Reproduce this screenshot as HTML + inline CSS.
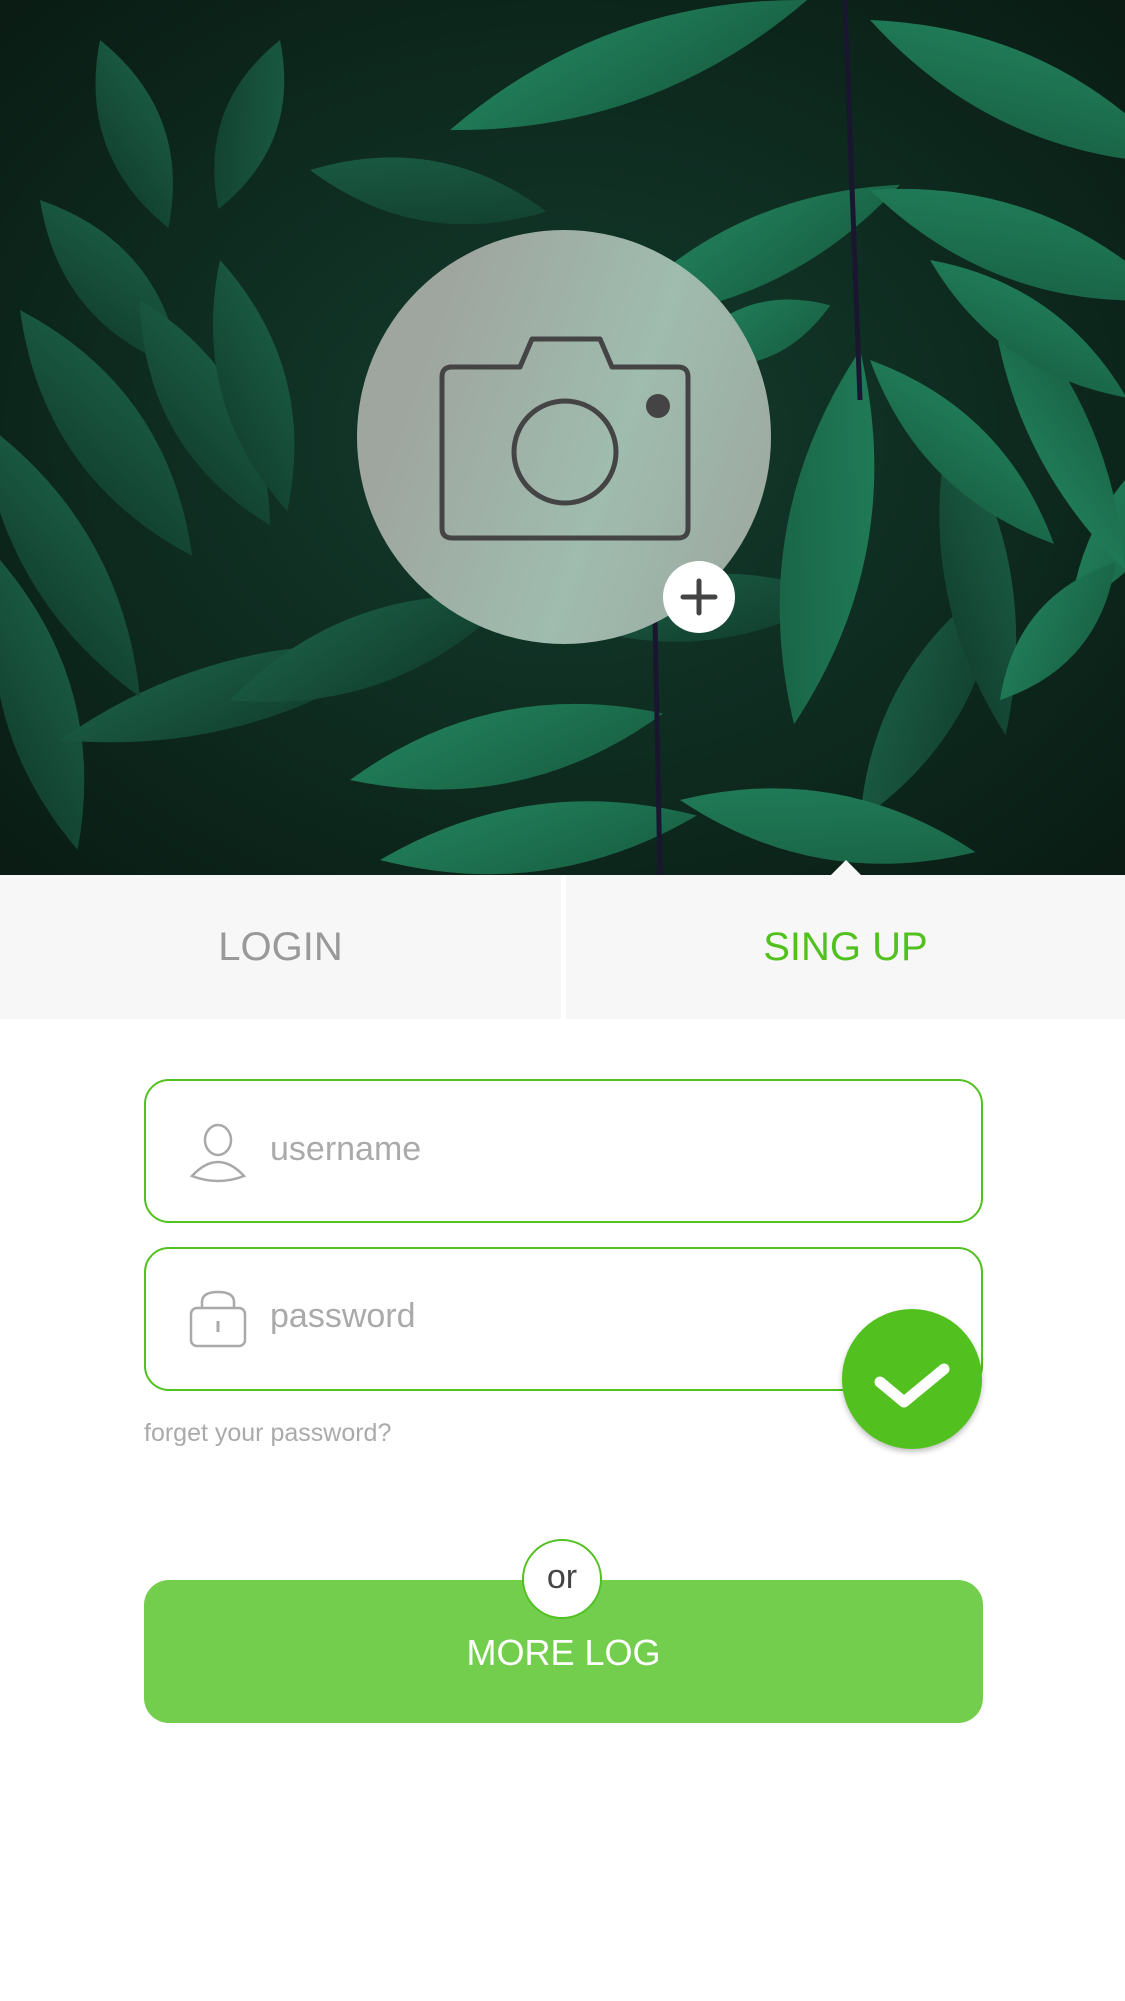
<!DOCTYPE html>
<html><head><meta charset="utf-8"><style>
html,body{margin:0;padding:0;width:1125px;height:2001px;background:#fff;overflow:hidden;font-family:"Liberation Sans",sans-serif}
.abs{position:absolute}
</style></head><body>
<div class="abs" style="left:0;top:0;width:1125px;height:875px;overflow:hidden;background:#0b1c15">
<svg width="1125" height="875" viewBox="0 0 1125 875" style="position:absolute;left:0;top:0">
<defs>
<radialGradient id="g1" cx="0.5" cy="0.5" r="0.8"><stop offset="0" stop-color="#143d2e"/><stop offset="1" stop-color="#081710"/></radialGradient>
<linearGradient id="lb" x1="0" y1="0" x2="1" y2="1"><stop offset="0" stop-color="#22805b"/><stop offset="1" stop-color="#176043"/></linearGradient>
<linearGradient id="ld" x1="0" y1="0" x2="1" y2="1"><stop offset="0" stop-color="#1b5e46"/><stop offset="1" stop-color="#113d2d"/></linearGradient>
<path id="leaf" d="M0,0 Q100,-55 200,0 Q100,55 0,0Z"/>
</defs>
<rect width="1125" height="875" fill="url(#g1)"/>
<g fill="url(#ld)">
<use href="#leaf" transform="translate(40,200) rotate(50) scale(1.1,1.2)"/>
<use href="#leaf" transform="translate(100,40) rotate(70) scale(1.0,1.1)"/>
<use href="#leaf" transform="translate(280,40) rotate(110) scale(0.9,1.0)"/>
<use href="#leaf" transform="translate(310,170) rotate(10) scale(1.2,1.1)"/>
<use href="#leaf" transform="translate(20,310) rotate(55) scale(1.5,1.4)"/>
<use href="#leaf" transform="translate(140,300) rotate(60) scale(1.3,1.3)"/>
<use href="#leaf" transform="translate(220,260) rotate(75) scale(1.3,1.2)"/>
<use href="#leaf" transform="translate(0,560) rotate(75) scale(1.5,1.3)"/>
<use href="#leaf" transform="translate(60,740) rotate(-15) scale(1.8,1.2)"/>
<use href="#leaf" transform="translate(230,700) rotate(-20) scale(1.5,1.3)"/>
<use href="#leaf" transform="translate(520,470) rotate(30) scale(1.2,1.0)"/>
<use href="#leaf" transform="translate(860,820) rotate(-60) scale(1.4,1.2)"/>
<use href="#leaf" transform="translate(-20,420) rotate(60) scale(1.6,1.3)"/>
<use href="#leaf" transform="translate(560,620) rotate(-5) scale(1.4,1.2)"/>
<use href="#leaf" transform="translate(950,420) rotate(80) scale(1.6,1.2)"/>
</g>
<g fill="url(#lb)">
<use href="#leaf" transform="translate(450,130) rotate(-20) scale(1.9,1.3)"/>
<use href="#leaf" transform="translate(870,20) rotate(25) scale(1.7,1.3)"/>
<use href="#leaf" transform="translate(610,320) rotate(-25) scale(1.6,1.2)"/>
<use href="#leaf" transform="translate(870,190) rotate(20) scale(1.6,1.3)"/>
<use href="#leaf" transform="translate(680,360) rotate(-20) scale(0.8,1.0)"/>
<use href="#leaf" transform="translate(870,360) rotate(45) scale(1.3,1.1)"/>
<use href="#leaf" transform="translate(860,350) rotate(100) scale(1.9,1.5)"/>
<use href="#leaf" transform="translate(1070,610) rotate(-55) scale(1.2,1.1)"/>
<use href="#leaf" transform="translate(1125,570) rotate(-115) scale(1.6,1.1)"/>
<use href="#leaf" transform="translate(350,780) rotate(-12) scale(1.6,1.3)"/>
<use href="#leaf" transform="translate(380,860) rotate(-8) scale(1.6,1.2)"/>
<use href="#leaf" transform="translate(680,800) rotate(10) scale(1.5,1.2)"/>
<use href="#leaf" transform="translate(1000,700) rotate(-50) scale(0.9,1.0)"/>
<use href="#leaf" transform="translate(930,260) rotate(35) scale(1.2,1.0)"/>
</g>
<path d="M845,0 L860,400 M655,620 L660,875" stroke="#1a1630" stroke-width="5" fill="none"/>
</svg>
<div class="abs" style="left:357px;top:230px;width:414px;height:414px;border-radius:50%;background:linear-gradient(110deg,#9fa69f 20%,#9fbcae 60%,#9eaba2 90%)"></div>
<svg class="abs" style="left:0;top:0" width="1125" height="875">
<g fill="none" stroke="#444" stroke-width="5" stroke-linejoin="round">
<path d="M450,367 L520,367 L532,339 L600,339 L612,367 L678,367 Q688,367 688,377 L688,528 Q688,538 678,538 L452,538 Q442,538 442,528 L442,377 Q442,367 452,367Z"/>
<circle cx="565" cy="452" r="51"/>
</g>
<circle cx="658" cy="406" r="12" fill="#444"/>
<circle cx="699" cy="597" r="36" fill="#fff"/>
<path d="M683,597 H715 M699,581 V613" stroke="#444" stroke-width="5" stroke-linecap="round"/>
</svg>
<div class="abs" style="left:831px;top:860px;width:0;height:0;border-left:15px solid transparent;border-right:15px solid transparent;border-bottom:15px solid #f7f7f7"></div>
</div>
<div class="abs" style="left:0;top:875px;width:561px;height:144px;background:#f7f7f7;color:#999;font-size:40px;display:flex;align-items:center;justify-content:center">LOGIN</div>
<div class="abs" style="left:566px;top:875px;width:559px;height:144px;background:#f7f7f7;color:#52c11f;font-size:40px;display:flex;align-items:center;justify-content:center">SING UP</div>

<div class="abs" style="left:144px;top:1079px;width:835px;height:140px;border:2.5px solid #52c11f;border-radius:25px"></div>
<svg class="abs" style="left:188px;top:1122px" width="60" height="64">
<ellipse cx="30" cy="18" rx="13" ry="15" fill="none" stroke="#a9a9a9" stroke-width="2.5"/>
<path d="M4,54 Q30,26 56,54 Q30,64 4,54Z" fill="none" stroke="#a9a9a9" stroke-width="2.5"/>
</svg>
<div class="abs" style="left:270px;top:1130px;font-size:34px;color:#aaa">username</div>

<div class="abs" style="left:144px;top:1247px;width:835px;height:140px;border:2.5px solid #52c11f;border-radius:25px"></div>
<svg class="abs" style="left:188px;top:1288px" width="60" height="62">
<path d="M14,20 V14 Q14,4 30,4 Q46,4 46,14 V20" fill="none" stroke="#a9a9a9" stroke-width="2.5"/>
<rect x="3" y="20" width="54" height="38" rx="6" fill="none" stroke="#a9a9a9" stroke-width="2.5"/>
<path d="M30,33 V44" stroke="#a9a9a9" stroke-width="3"/>
</svg>
<div class="abs" style="left:270px;top:1297px;font-size:34px;color:#aaa">password</div>

<div class="abs" style="left:842px;top:1309px;width:140px;height:140px;border-radius:50%;background:#52c11f;box-shadow:0 3px 6px rgba(0,0,0,.25)"></div>
<svg class="abs" style="left:842px;top:1309px" width="140" height="140"><path d="M38,73 L62,93 L102,60" fill="none" stroke="#fff" stroke-width="11" stroke-linecap="round" stroke-linejoin="round"/></svg>
<div class="abs" style="left:144px;top:1419px;font-size:25px;color:#aaa">forget your password?</div>

<div class="abs" style="left:144px;top:1580px;width:839px;height:143px;border-radius:25px;background:#74ce4e;color:#fff;font-size:36px;display:flex;align-items:center;justify-content:center;padding-top:2px;box-sizing:border-box">MORE LOG</div>
<div class="abs" style="left:522px;top:1539px;width:80px;height:80px;border-radius:50%;background:#fff;border:2.5px solid #52c11f;color:#444;font-size:34px;display:flex;align-items:center;justify-content:center;box-sizing:border-box;padding-bottom:4px">or</div>
</body></html>
